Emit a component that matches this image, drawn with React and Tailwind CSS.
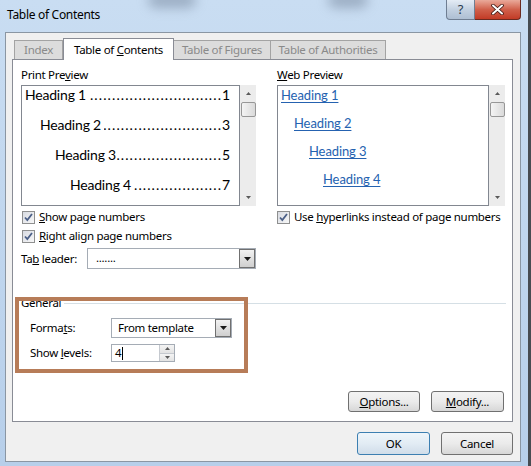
import React from 'react';

// Win7 "Table of Contents" dialog (Word), with the brown annotation box

function Tri({ down, className }) {
  return (
    <svg width="7" height="4" viewBox="0 0 7 4" className={className}>
      {down ? <path d="M0 0 H7 L3.5 4 Z" fill="#1a1a1a" /> : <path d="M0 4 H7 L3.5 0 Z" fill="#1a1a1a" />}
    </svg>
  );
}

function SmallTri({ down }) {
  return (
    <svg width="5" height="3" viewBox="0 0 5 3">
      {down ? <path d="M0 0 H5 L2.5 3 Z" fill="#5a5a5a" /> : <path d="M0 3 H5 L2.5 0 Z" fill="#5a5a5a" />}
    </svg>
  );
}

function Check() {
  return (
    <span className="w-[13px] h-[13px] border border-[#8e8f8f] bg-linear-to-br from-[#d8dbe2] to-[#f7f7f7] flex items-center justify-center shrink-0">
      <svg width="11" height="11" viewBox="0 0 11 11">
        <path d="M2 5.5 L4.3 8 L9 2" fill="none" stroke="#4b5f87" strokeWidth="1.8" />
      </svg>
    </span>
  );
}

function Scroll() {
  return (
    <div className="w-[16px] bg-[#ececec] flex flex-col items-center shrink-0">
      <div className="h-[17px] flex items-center justify-center">
        <SmallTri />
      </div>
      <div className="w-[15px] h-[15px] border border-[#979797] rounded-[2px] bg-linear-to-r from-[#f4f4f4] to-[#dadada]" />
      <div className="flex-1" />
      <div className="h-[17px] flex items-center justify-center">
        <SmallTri down />
      </div>
    </div>
  );
}

function DropBtn() {
  return (
    <div className="w-[16px] border border-[#707070] bg-linear-to-b from-[#f2f2f2] to-[#cfcfcf] flex items-center justify-center">
      <Tri down />
    </div>
  );
}

function Btn({ className, children }) {
  return (
    <div
      className={
        'flex items-center justify-center border rounded-[3px] bg-linear-to-b ' + className
      }
    >
      {children}
    </div>
  );
}

const printRows = [
  { t: 'Heading 1 ', n: '1', pl: 'pl-[3px]' },
  { t: 'Heading 2 ', n: '3', pl: 'pl-[18px]' },
  { t: 'Heading 3', n: '5', pl: 'pl-[33px]' },
  { t: 'Heading 4 ', n: '7', pl: 'pl-[48px]' },
];

const webRows = [
  { t: 'Heading 1', pl: 'pl-[3px]' },
  { t: 'Heading 2', pl: 'pl-[16px]' },
  { t: 'Heading 3', pl: 'pl-[31px]' },
  { t: 'Heading 4', pl: 'pl-[45px]' },
];

export default function App() {
  return (
    <div className="w-[531px] h-[466px] flex overflow-hidden font-['Noto_Sans',sans-serif] text-[11.5px] tracking-[-0.3px] text-black">
      <div className="flex-1 flex flex-col relative overflow-hidden bg-linear-to-b from-[#c9ddf2] to-[#b7cfea]">
        {/* blurred desktop behind the glass */}
        <div className="absolute left-[148px] top-[-8px] w-[48px] h-[16px] rounded-full bg-[#7d8ea4] blur-[6px] opacity-60" />
        <div className="absolute left-[328px] top-[-8px] w-[40px] h-[16px] rounded-full bg-[#7d8ea4] blur-[6px] opacity-60" />

        {/* title bar */}
        <div className="h-[32px] flex items-start relative">
          <span className="pl-[7px] pt-[7px] leading-[16px] text-[12px]">Table of Contents</span>
          <div className="ml-auto mr-[7px] flex">
            <div className="w-[29px] h-[20px] border border-[#6f7e92] border-t-0 rounded-bl-[4px] bg-linear-to-b from-[#e4ecf5] via-[#c3d1e1] to-[#aebfd3] flex items-center justify-center text-[13px] text-[#2b3a4f] leading-none">
              ?
            </div>
            <div className="w-[46px] h-[20px] border border-[#6b2a20] border-t-0 border-l-0 rounded-br-[4px] bg-linear-to-b from-[#e9a99a] via-[#d0604b] to-[#c23a25] flex items-center justify-center">
              <svg width="13" height="11" viewBox="0 0 13 11">
                <path d="M2 1.5 L11 9.5 M11 1.5 L2 9.5" stroke="#3a1510" strokeWidth="3.6" strokeLinecap="round" />
                <path d="M2 1.5 L11 9.5 M11 1.5 L2 9.5" stroke="#ffffff" strokeWidth="2" strokeLinecap="round" />
              </svg>
            </div>
          </div>
        </div>

        {/* client area */}
        <div className="ml-[5px] mr-[7px] h-[430px] border border-[#8a96a3] bg-[#f0f0f0] pl-[6px] pr-[7px] pt-[5px] flex flex-col relative">
          {/* tabs */}
          <div className="flex items-end ml-[2px] h-[21px] relative z-10">
            <div className="w-[49px] h-[19px] border border-b-0 border-[#a3a3a3] bg-[#dcdcdc] text-[#8a8a8a] flex items-center justify-center">
              Index
            </div>
            <div className="w-[111px] h-[22px] mb-[-1px] border border-b-0 border-[#898c95] bg-white flex items-center justify-center">
              Table of&nbsp;<span className="underline">C</span>ontents
            </div>
            <div className="w-[97px] h-[19px] border border-b-0 border-l-0 border-[#a3a3a3] bg-[#dcdcdc] text-[#8a8a8a] flex items-center justify-center">
              Table of Figures
            </div>
            <div className="w-[115px] h-[19px] border border-b-0 border-l-0 border-[#a3a3a3] bg-[#dcdcdc] text-[#8a8a8a] flex items-center justify-center">
              Table of Authorities
            </div>
          </div>

          {/* panel */}
          <div className="h-[363px] border border-[#898c95] bg-white flex flex-col relative">
            <div className="flex pl-[8px] pt-[7px]">
              {/* print preview */}
              <div className="w-[235px] flex flex-col">
                <div className="h-[16px] leading-[16px]">
                  Print Pre<span className="underline">v</span>iew
                </div>
                <div className="mt-[2px] h-[121px] flex">
                  <div className="flex-1 min-w-0 border border-[#828790] bg-white font-['Lato',sans-serif] text-[14px] tracking-[-0.2px] pr-[9px] pt-[1px]">
                    {printRows.map((r) => (
                      <div key={r.n} className={'flex h-[16px] leading-[16px] mb-[14px] whitespace-nowrap ' + r.pl}>
                        <span className="whitespace-pre">{r.t}</span>
                        <span className="flex-1 min-w-0 flex justify-end overflow-hidden">
                          <span className="tracking-[1.1px]">{'.'.repeat(50)}</span>
                        </span>
                        <span>{r.n}</span>
                      </div>
                    ))}
                  </div>
                  <Scroll />
                </div>
                <div className="mt-[3px] h-[16px] flex items-center pl-[1px]">
                  <Check />
                  <span className="ml-[4px]">
                    <span className="underline">S</span>how page numbers
                  </span>
                </div>
                <div className="mt-[3px] h-[16px] flex items-center pl-[1px]">
                  <Check />
                  <span className="ml-[4px]">
                    <span className="underline">R</span>ight align page numbers
                  </span>
                </div>
                <div className="mt-[4px] h-[21px] flex items-center">
                  <span className="w-[66px]">
                    Ta<span className="underline">b</span> leader:
                  </span>
                  <div className="flex-1 h-[21px] border border-[#a5acb5] bg-white flex">
                    <span className="flex-1 pl-[8px] leading-[17px]">.......</span>
                    <DropBtn />
                  </div>
                </div>
              </div>

              {/* web preview */}
              <div className="ml-[21px] w-[228px] flex flex-col">
                <div className="h-[16px] leading-[16px]">
                  <span className="underline">W</span>eb Preview
                </div>
                <div className="mt-[2px] h-[121px] flex">
                  <div className="flex-1 min-w-0 border border-[#828790] bg-white font-['Lato',sans-serif] text-[13px] tracking-[-0.1px] text-[#2562b0]">
                    {webRows.map((r) => (
                      <div key={r.t} className={'h-[18px] leading-[18px] mb-[10px] ' + r.pl}>
                        <span className="underline underline-offset-2">{r.t}</span>
                      </div>
                    ))}
                  </div>
                  <Scroll />
                </div>
                <div className="mt-[3px] h-[16px] flex items-center whitespace-nowrap">
                  <Check />
                  <span className="ml-[4px]">
                    Use <span className="underline">h</span>yperlinks instead of page numbers
                  </span>
                </div>
              </div>
            </div>

            {/* general */}
            <div className="mt-[26px] pl-[8px] pr-[6px] h-[16px] flex items-start">
              <span className="leading-[16px]">General</span>
              <div className="flex-1 ml-[3px] mt-[8px] border-t border-[#d5dfe5]" />
            </div>
            <div className="mt-[7px] pl-[17px] h-[20px] flex items-center">
              <span className="w-[81px]">
                Forma<span className="underline">t</span>s:
              </span>
              <div className="w-[121px] h-[20px] border border-[#a5acb5] bg-white flex">
                <span className="flex-1 pl-[6px] leading-[18px]">From template</span>
                <DropBtn />
              </div>
            </div>
            <div className="mt-[6px] pl-[17px] h-[18px] flex items-center">
              <span className="w-[81px]">
                Show <span className="underline">l</span>evels:
              </span>
              <div className="w-[64px] h-[18px] border border-[#a5acb5] bg-white flex">
                <span className="flex-1 pl-[3px] leading-[16px] flex items-center">
                  4<span className="w-[1px] h-[13px] bg-black ml-[1px]" />
                </span>
                <div className="w-[15px] flex flex-col border-l border-[#c5c9cf]">
                  <div className="flex-1 bg-linear-to-b from-[#f4f4f4] to-[#e3e3e3] border-b border-[#c5c9cf] flex items-center justify-center">
                    <SmallTri />
                  </div>
                  <div className="flex-1 bg-linear-to-b from-[#f4f4f4] to-[#e3e3e3] flex items-center justify-center">
                    <SmallTri down />
                  </div>
                </div>
              </div>
            </div>

            {/* annotation box */}
            <div className="absolute left-[2px] top-[237px] w-[233px] h-[76px] border-[4px] border-[#b77c58] z-20" />

            <div className="mt-auto mb-[9px] pr-[8px] flex justify-end gap-[11px]">
              <Btn className="w-[72px] h-[21px] border-[#707070] from-[#f3f3f3] via-[#ebebeb] to-[#d7d7d7]">
                <span>
                  <span className="underline">O</span>ptions...
                </span>
              </Btn>
              <Btn className="w-[73px] h-[21px] border-[#707070] from-[#f3f3f3] via-[#ebebeb] to-[#d7d7d7]">
                <span>
                  <span className="underline">M</span>odify...
                </span>
              </Btn>
            </div>
          </div>

          {/* ok / cancel */}
          <div className="mt-[10px] flex justify-end gap-[11px]">
            <Btn className="w-[73px] h-[23px] border-[#3c7fb1] from-[#eef5fa] via-[#e2ecf4] to-[#d0dde9]">OK</Btn>
            <Btn className="w-[72px] h-[23px] border-[#707070] from-[#f3f3f3] via-[#ebebeb] to-[#d7d7d7]">Cancel</Btn>
          </div>
        </div>
      </div>
      <div className="w-[3px] bg-[#474c52]" />
    </div>
  );
}
